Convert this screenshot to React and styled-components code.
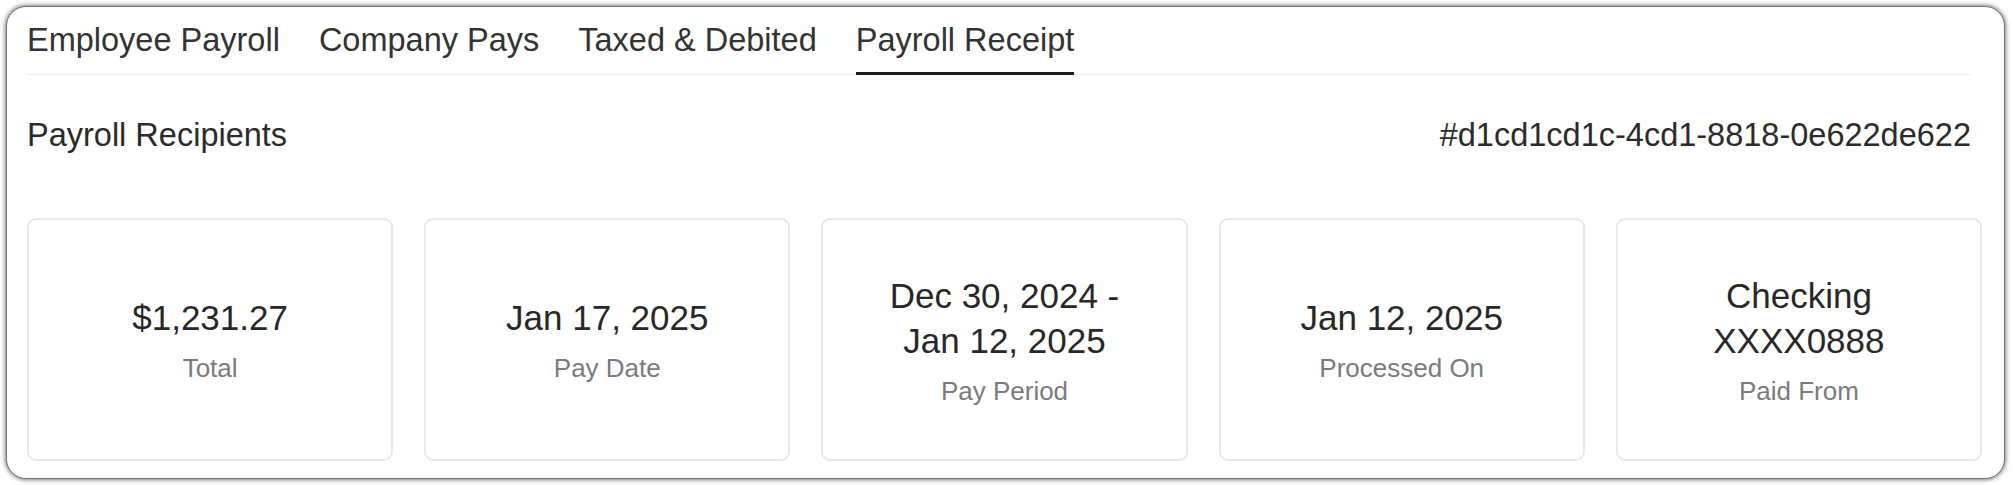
import styled, { createGlobalStyle } from "styled-components";

const GlobalStyle = createGlobalStyle`
    html, body {
        margin: 0;
        padding: 0;
        background: #fff;
    }
    body {
        font-family: "Liberation Sans", Arial, sans-serif;
        color: #2b2b2b;
    }
`;

const Frame = styled.div`
    box-sizing: border-box;
    height: 473px;
    margin: 6px 8px 6px 6px;
    padding: 14px 22px 15px 20px;
    border: 1.5px solid #737373;
    border-radius: 20px;
    box-shadow: 0 0 4px 1px rgba(0, 0, 0, 0.5);
    background: #fff;
`;

const Top = styled.div`
    margin-right: 11px;
`;

const TabList = styled.div`
    display: flex;
    gap: 39px;
    border-bottom: 1px solid #efefef;
`;

const Tab = styled.div`
    font-size: 32.5px;
    line-height: 38px;
    color: #333;
    padding-bottom: 13px;
    border-bottom: 3px solid ${(p) => (p.$active ? "#1c1c1c" : "transparent")};
    margin-bottom: -1px;
    white-space: nowrap;
`;

const HeaderRow = styled.div`
    display: flex;
    justify-content: space-between;
    align-items: baseline;
    margin-top: 41px;
    font-size: 32.5px;
    line-height: 38px;
    color: #2b2b2b;
`;

const CardGrid = styled.div`
    display: grid;
    grid-template-columns: repeat(5, 1fr);
    gap: 31px;
    margin-top: 64px;
`;

const Card = styled.div`
    box-sizing: border-box;
    height: 243px;
    border: 2px solid #e8e8e8;
    border-radius: 9px;
    display: flex;
    flex-direction: column;
    align-items: center;
    justify-content: center;
    text-align: center;
`;

const Value = styled.div`
    font-size: 35px;
    line-height: 45px;
    color: #282828;
`;

const Label = styled.div`
    font-size: 26px;
    line-height: 32px;
    margin-top: 12px;
    color: #7b7b7b;
`;

const tabs = ["Employee Payroll", "Company Pays", "Taxed & Debited", "Payroll Receipt"];

const stats = [
    { value: ["$1,231.27"], label: "Total" },
    { value: ["Jan 17, 2025"], label: "Pay Date" },
    { value: ["Dec 30, 2024 -", "Jan 12, 2025"], label: "Pay Period" },
    { value: ["Jan 12, 2025"], label: "Processed On" },
    { value: ["Checking", "XXXX0888"], label: "Paid From" },
];

const App = () => {
    return (
        <>
            <GlobalStyle />
            <Frame>
                <Top>
                    <TabList>
                        {tabs.map((t) => (
                            <Tab key={t} $active={t === "Payroll Receipt"}>{t}</Tab>
                        ))}
                    </TabList>
                    <HeaderRow>
                        <span>Payroll Recipients</span>
                        <span>#d1cd1cd1c-4cd1-8818-0e622de622</span>
                    </HeaderRow>
                </Top>
                <CardGrid>
                    {stats.map((s) => (
                        <Card key={s.label}>
                            {s.value.map((line) => (
                                <Value key={line}>{line}</Value>
                            ))}
                            <Label>{s.label}</Label>
                        </Card>
                    ))}
                </CardGrid>
            </Frame>
        </>
    );
};

export default App;
